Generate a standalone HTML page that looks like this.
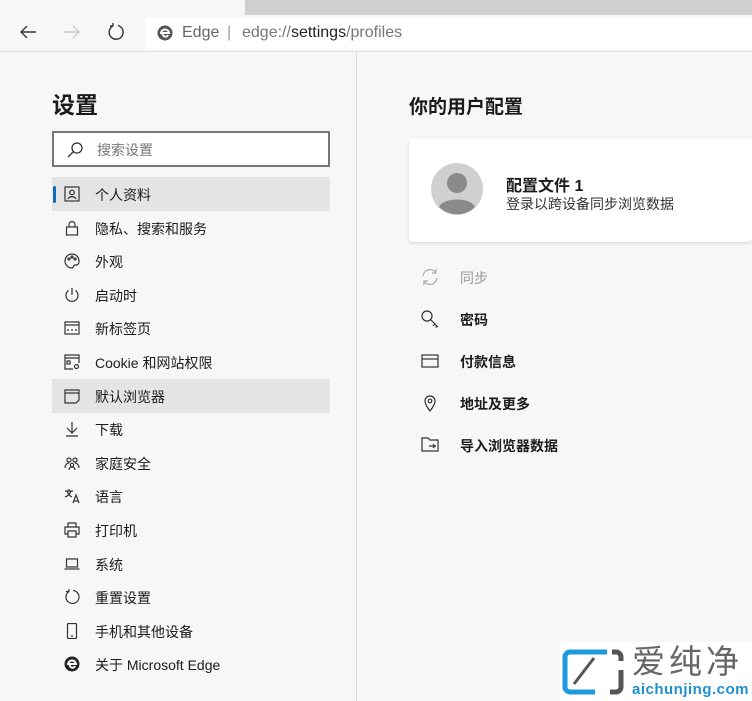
<!DOCTYPE html>
<html><head><meta charset="utf-8"><style>
*{margin:0;padding:0;box-sizing:border-box;white-space:nowrap}
body{width:752px;height:701px;overflow:hidden;background:#f7f7f7;font-family:"Liberation Sans","Noto Sans CJK SC",sans-serif;color:#1b1b1b;position:relative}
.abs{position:absolute}
.tabs{left:0;top:0;width:752px;height:15px;background:#cfcfcf}
.tab{left:0;top:0;width:245px;height:15px;background:#f7f7f7}
.toolbar{left:0;top:15px;width:752px;height:37px;background:#f7f7f7;border-bottom:1px solid #e0e0e0}
.addr{left:145px;top:17px;width:607px;height:32px;background:#fff;border-radius:4px 0 0 4px}
.addr span{position:absolute;top:7px;font-size:16px}
.div{left:356px;top:52px;width:1px;height:649px;background:#dcdcdc}
h1{position:absolute;left:52px;top:86px;font-size:23px;font-weight:bold}
.search{left:52px;top:131px;width:278px;height:36px;border:2px solid #767676;background:#fff}
.search span{position:absolute;left:43px;top:7px;font-size:14px;color:#777}
.item{position:absolute;left:52px;width:278px;height:34px;font-size:14px}
.item span{position:absolute;left:43px;top:8px}
.item svg{position:absolute;left:12px;top:9px}
.sel{background:#e4e4e4}
.bar{position:absolute;left:1px;top:9px;width:3px;height:17px;background:#0f6cbd;border-radius:2px}
h2{position:absolute;left:409px;top:92px;font-size:19px;font-weight:bold}
.card{left:409px;top:138px;width:343px;height:104px;background:#fff;border-radius:4px;box-shadow:0 1px 3px rgba(0,0,0,.15)}
.row{position:absolute;left:420px;width:300px;height:20px;font-size:14px;font-weight:bold}
.row span{position:absolute;left:40px;top:0}
.row svg{position:absolute;left:0;top:-1px}
</style></head><body>
<div class="abs tabs"></div><div class="abs tab"></div>
<div class="abs toolbar"></div>
<svg class="abs" style="left:18px;top:22px" width="20" height="20" viewBox="0 0 20 20" fill="none" stroke="#333" stroke-width="1.4"><path d="M18 10H3M9 4L3 10l6 6"/></svg>
<svg class="abs" style="left:62px;top:22px" width="20" height="20" viewBox="0 0 20 20" fill="none" stroke="#ccc" stroke-width="1.4"><path d="M2 10h15M11 4l6 6-6 6"/></svg>
<svg class="abs" style="left:106px;top:22px" width="20" height="20" viewBox="0 0 20 20" fill="none" stroke="#333" stroke-width="1.4"><path d="M12 3.5A7 7 0 1 1 7 4M7 4V1M7 4H4"/></svg>
<div class="abs addr">
<svg style="position:absolute;left:12px;top:8px" width="16" height="16" viewBox="0 0 16 16"><circle cx="8" cy="8" r="7.5" fill="#555"/><path d="M4 9a4 4 0 0 1 8-1H6a2.5 2.5 0 0 0 5 2" fill="none" stroke="#fff" stroke-width="2"/></svg>
<span style="left:37px;color:#666">Edge</span>
<span style="left:82px;color:#999">|</span>
<span style="left:97px;color:#777">edge://<b style="font-weight:normal;color:#222">settings</b>/profiles</span>
</div>
<div class="abs div"></div>
<h1>设置</h1>
<div class="abs search">
<svg style="position:absolute;left:12px;top:8px" width="18" height="18" viewBox="0 0 18 18" fill="none" stroke="#333" stroke-width="1.3"><circle cx="11" cy="7" r="5"/><path d="M7.5 10.5L2 16"/></svg>
<span>搜索设置</span></div>

<div class="item sel" style="top:177px"><div class="bar"></div><svg width="16" height="16" viewBox="0 0 16 16" fill="none" stroke="#333" stroke-width="1.2"><rect x="1" y="1" width="14" height="14"/><circle cx="8" cy="6.5" r="2.3"/><path d="M4 13c1-3 7-3 8 0"/></svg><span>个人资料</span></div>
<div class="item" style="top:211px"><svg width="16" height="16" viewBox="0 0 16 16" fill="none" stroke="#333" stroke-width="1.2"><rect x="2.5" y="7" width="11" height="8"/><path d="M5 7V4.5a3 3 0 0 1 6 0V7"/></svg><span>隐私、搜索和服务</span></div>
<div class="item" style="top:244px"><svg width="16" height="16" viewBox="0 0 16 16" fill="none" stroke="#333" stroke-width="1.2"><path d="M8 1a7 7 0 1 0 0 14c2 0 1-3 3-3s4 0 4-4a7 7 0 0 0-7-7z"/><circle cx="5" cy="6" r="1"/><circle cx="8" cy="4" r="1"/><circle cx="11" cy="6" r="1"/></svg><span>外观</span></div>
<div class="item" style="top:278px"><svg width="16" height="16" viewBox="0 0 16 16" fill="none" stroke="#333" stroke-width="1.2"><path d="M8 1v7M4.5 3.5a6 6 0 1 0 7 0"/></svg><span>启动时</span></div>
<div class="item" style="top:311px"><svg width="16" height="16" viewBox="0 0 16 16" fill="none" stroke="#333" stroke-width="1.2"><rect x="1" y="2" width="14" height="12"/><path d="M1 5h14M3 10h2M7 10h2M11 10h2"/></svg><span>新标签页</span></div>
<div class="item" style="top:345px"><svg width="16" height="16" viewBox="0 0 16 16" fill="none" stroke="#333" stroke-width="1.2"><path d="M9 15H1V1h14v8M1 4h14"/><rect x="3" y="7" width="3" height="3"/><circle cx="12.5" cy="12.5" r="2"/></svg><span>Cookie 和网站权限</span></div>
<div class="item sel" style="top:379px"><svg width="16" height="16" viewBox="0 0 16 16" fill="none" stroke="#333" stroke-width="1.2"><path d="M1 2h14v10l-3 3H1zM1 5h14"/></svg><span>默认浏览器</span></div>
<div class="item" style="top:412px"><svg width="16" height="16" viewBox="0 0 16 16" fill="none" stroke="#333" stroke-width="1.2"><path d="M8 1v11M3 7l5 5 5-5M2 15h12"/></svg><span>下载</span></div>
<div class="item" style="top:446px"><svg width="16" height="16" viewBox="0 0 16 16" fill="none" stroke="#333" stroke-width="1.2"><circle cx="5" cy="5" r="2"/><circle cx="11" cy="5" r="2"/><circle cx="8" cy="10" r="1.7"/><path d="M1 13c0-3 2-5 4-5M15 13c0-3-2-5-4-5M5 15c0-2 1.5-3 3-3s3 1 3 3"/></svg><span>家庭安全</span></div>
<div class="item" style="top:479px"><svg width="16" height="16" viewBox="0 0 16 16" fill="none" stroke="#333" stroke-width="1.2"><path d="M1 3h8M5 1v2M3 3c1 3 3 5 5 6M7 3c-1 3-3 5-6 6M9 15l3-8 3 8M10 13h4"/></svg><span>语言</span></div>
<div class="item" style="top:513px"><svg width="16" height="16" viewBox="0 0 16 16" fill="none" stroke="#333" stroke-width="1.2"><path d="M4 5V1h8v4M4 12H1V5h14v7h-3M4 9h8v6H4z"/></svg><span>打印机</span></div>
<div class="item" style="top:547px"><svg width="16" height="16" viewBox="0 0 16 16" fill="none" stroke="#333" stroke-width="1.2"><rect x="2.5" y="3" width="11" height="8"/><path d="M0.5 13h15"/></svg><span>系统</span></div>
<div class="item" style="top:580px"><svg width="16" height="16" viewBox="0 0 16 16" fill="none" stroke="#333" stroke-width="1.2"><path d="M5 2.5A6.5 6.5 0 1 0 9 1.5M5 2.5V0M5 2.5H2"/></svg><span>重置设置</span></div>
<div class="item" style="top:614px"><svg width="16" height="16" viewBox="0 0 16 16" fill="none" stroke="#333" stroke-width="1.2"><rect x="3.5" y="0.5" width="9" height="15" rx="1"/><path d="M7 13h2"/></svg><span>手机和其他设备</span></div>
<div class="item" style="top:647px"><svg width="16" height="16" viewBox="0 0 16 16"><circle cx="8" cy="8" r="7.5" fill="#222"/><path d="M4 9a4 4 0 0 1 8-1H6a2.5 2.5 0 0 0 5 2" fill="none" stroke="#fff" stroke-width="2"/></svg><span>关于 Microsoft Edge</span></div>

<h2>你的用户配置</h2>
<div class="abs card">
<svg style="position:absolute;left:22px;top:25px" width="52" height="52" viewBox="0 0 52 52"><circle cx="26" cy="26" r="26" fill="#d0d0d0"/><circle cx="26" cy="20" r="10" fill="#8a8a8a"/><path d="M8 44c4-10 32-10 36 0a26 26 0 0 1-36 0z" fill="#8a8a8a"/></svg>
<div style="position:absolute;left:97px;top:34px;font-size:16px;font-weight:bold">配置文件 1</div>
<div style="position:absolute;left:97px;top:56px;font-size:14px;color:#333">登录以跨设备同步浏览数据</div>
</div>
<div class="row" style="top:268px;color:#999;font-weight:normal"><svg width="20" height="20" viewBox="0 0 20 20" fill="none" stroke="#aaa" stroke-width="1.2"><path d="M3 9a7 7 0 0 1 13-3M17 11a7 7 0 0 1-13 3M16 2v4h-4M4 18v-4h4"/></svg><span>同步</span></div>
<div class="row" style="top:310px"><svg width="20" height="20" viewBox="0 0 20 20" fill="none" stroke="#333" stroke-width="1.2"><circle cx="7" cy="7" r="5"/><path d="M10.5 10.5L18 18M15 15l-2 2M17 17l-1.5 1.5"/></svg><span>密码</span></div>
<div class="row" style="top:352px"><svg width="20" height="20" viewBox="0 0 20 20" fill="none" stroke="#333" stroke-width="1.2"><rect x="2" y="4" width="16" height="12"/><path d="M2 8h16"/></svg><span>付款信息</span></div>
<div class="row" style="top:394px"><svg width="20" height="20" viewBox="0 0 20 20" fill="none" stroke="#333" stroke-width="1.2"><path d="M10 18s-5-6-5-10a5 5 0 0 1 10 0c0 4-5 10-5 10z"/><circle cx="10" cy="8" r="1.8"/></svg><span>地址及更多</span></div>
<div class="row" style="top:436px"><svg width="20" height="20" viewBox="0 0 20 20" fill="none" stroke="#333" stroke-width="1.2"><path d="M2 16V3h6l2 2h8v11H2zM9 11h7M13 9l2 2-2 2"/></svg><span>导入浏览器数据</span></div>

<div class="abs" style="left:560px;top:642px;width:192px;height:59px;background:#fff"></div>
<svg class="abs" style="left:562px;top:648px" width="62" height="48" viewBox="0 0 62 48" fill="none" stroke-width="5"><path d="M45 4H8a5 5 0 0 0-5 5v30a5 5 0 0 0 5 5h25" stroke="#1e9be0"/><path d="M50 4h4a5 5 0 0 1 5 5v4M59 22v17a5 5 0 0 1-5 5h-6" stroke="#555"/><path d="M12 36L32 10" stroke="#555" stroke-width="3"/></svg>
<div class="abs" style="left:632px;top:642px;font-size:33px;color:#666;letter-spacing:4px;line-height:40px">爱纯净</div>
<div class="abs" style="left:632px;top:681px;font-size:15px;color:#1e8fd0;font-weight:bold;letter-spacing:0.5px">aichunjing.com</div>
</body></html>
